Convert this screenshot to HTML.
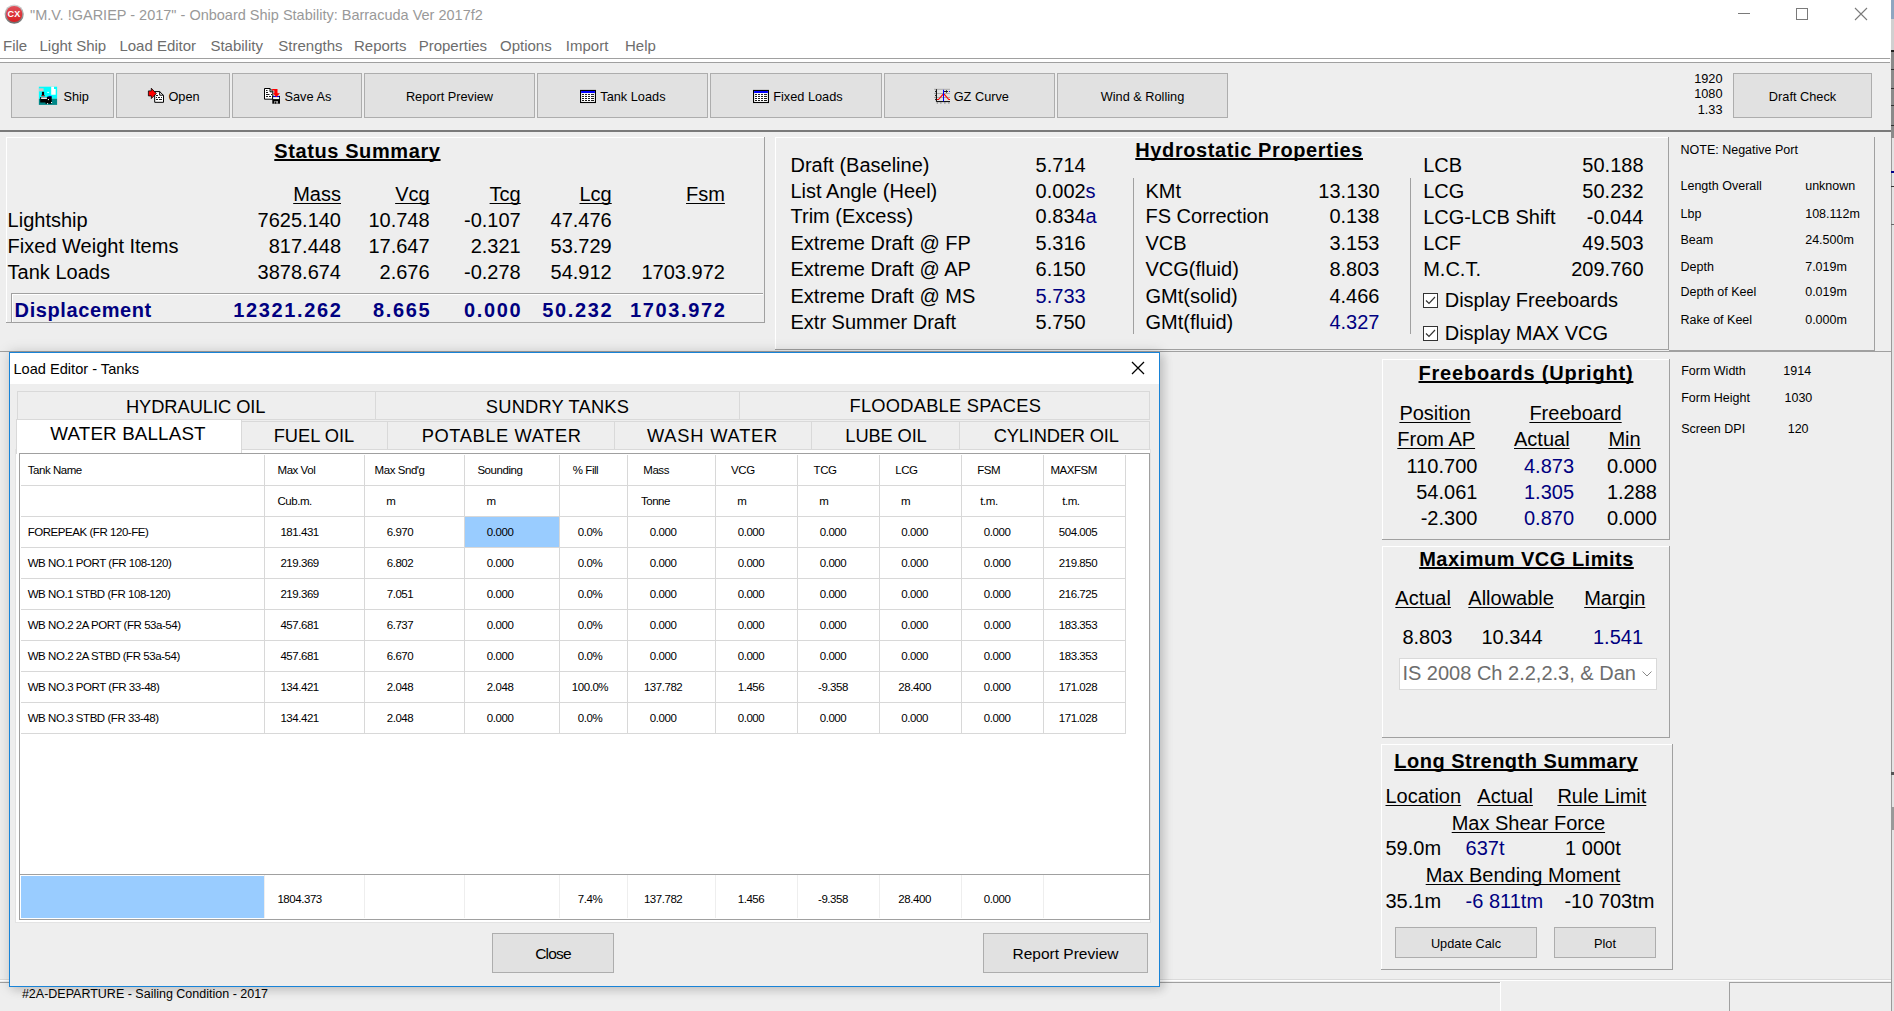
<!DOCTYPE html><html><head><meta charset="utf-8"><style>
html,body{margin:0;padding:0;width:1894px;height:1011px;overflow:hidden;background:#eeeeee;font-family:'Liberation Sans',sans-serif;color:#000}
body div,body span,body svg{position:absolute}
body span{white-space:nowrap;line-height:1;text-decoration-skip-ink:none;text-decoration-thickness:1px;text-underline-offset:2px}
</style></head><body>
<div style="left:0px;top:0px;width:1891px;height:58px;background:#fff"></div>
<div style="left:0px;top:58px;width:1890px;height:1px;background:#a0a0a0"></div>
<div style="left:0px;top:59px;width:1890px;height:3px;background:#fff"></div>
<div style="left:0px;top:62px;width:1890px;height:1px;background:#a0a0a0"></div>
<div style="left:1891px;top:0px;width:3px;height:1011px;background:#e4e4e4"></div>
<div style="left:1891px;top:138px;width:1px;height:873px;background:#9a9a9a"></div>
<div style="left:1891px;top:0px;width:3px;height:19px;background:#8ea6c0"></div>
<div style="left:1891px;top:19px;width:3px;height:32px;background:#d0d0d0"></div>
<div style="left:1891px;top:50px;width:3px;height:2px;background:#222"></div>
<div style="left:1891px;top:52px;width:3px;height:86px;background:#8a8a8a"></div>
<div style="left:1891px;top:69px;width:3px;height:1px;background:#333"></div>
<div style="left:1891px;top:88px;width:3px;height:1px;background:#333"></div>
<div style="left:1891px;top:105px;width:3px;height:1px;background:#333"></div>
<div style="left:1891px;top:125px;width:3px;height:1px;background:#333"></div>
<div style="left:1891px;top:171px;width:3px;height:2px;background:#00008b"></div>
<div style="left:1891px;top:186px;width:3px;height:1px;background:#333"></div>
<div style="left:1891px;top:224px;width:3px;height:1px;background:#666"></div>
<div style="left:1891px;top:772px;width:3px;height:3px;background:#555"></div>
<div style="left:1891px;top:807px;width:3px;height:23px;background:#999"></div>
<svg style="left:2px;top:2px" width="26" height="26" viewBox="0 0 26 26"><defs><linearGradient id="rg" x1="0" y1="0" x2="0" y2="1"><stop offset="0" stop-color="#d8d8d8"/><stop offset="1" stop-color="#6a6a6a"/></linearGradient><linearGradient id="rr" x1="0" y1="0" x2="0" y2="1"><stop offset="0" stop-color="#e0505a"/><stop offset="1" stop-color="#d81e22"/></linearGradient></defs><circle cx="12.2" cy="12.1" r="9.6" fill="url(#rg)"/><circle cx="12.2" cy="12" r="8.1" fill="url(#rr)"/></svg>
<span style="top:10.00px;font-size:9px;font-weight:bold;color:#fff;letter-spacing:0.3px;left:14px;transform:translateX(-50%);">CX</span>
<span style="top:8.00px;font-size:14.5px;color:#999;left:30px;">"M.V. !GARIEP - 2017" - Onboard Ship Stability: Barracuda Ver 2017f2</span>
<div style="left:1738px;top:13px;width:12px;height:1px;background:#7a7a7a"></div>
<div style="left:1796px;top:8px;width:12px;height:12px;border:1px solid #7a7a7a;box-sizing:border-box"></div>
<svg style="position:absolute;left:1854px;top:7px" width="14" height="14"><path d="M1 1L13 13M13 1L1 13" stroke="#7a7a7a" stroke-width="1.1"/></svg>
<span style="top:38.00px;font-size:15px;color:#6d6d6d;left:3px;">File</span>
<span style="top:38.00px;font-size:15px;color:#6d6d6d;left:39.5px;">Light Ship</span>
<span style="top:38.00px;font-size:15px;color:#6d6d6d;left:119.4px;">Load Editor</span>
<span style="top:38.00px;font-size:15px;color:#6d6d6d;left:210.4px;">Stability</span>
<span style="top:38.00px;font-size:15px;color:#6d6d6d;left:278.3px;">Strengths</span>
<span style="top:38.00px;font-size:15px;color:#6d6d6d;left:354px;">Reports</span>
<span style="top:38.00px;font-size:15px;color:#6d6d6d;left:418.7px;">Properties</span>
<span style="top:38.00px;font-size:15px;color:#6d6d6d;left:500px;">Options</span>
<span style="top:38.00px;font-size:15px;color:#6d6d6d;left:565.8px;">Import</span>
<span style="top:38.00px;font-size:15px;color:#6d6d6d;left:625px;">Help</span>
<div style="left:0px;top:63px;width:1891px;height:67px;background:#eeeeee"></div>
<div style="left:0px;top:130px;width:1891px;height:2px;background:#7a7a7a"></div>
<div style="left:11px;top:73px;width:103px;height:45px;background:#e1e1e1;border:1px solid #adadad;box-sizing:border-box"></div>
<div style="left:116px;top:73px;width:114px;height:45px;background:#e1e1e1;border:1px solid #adadad;box-sizing:border-box"></div>
<div style="left:232px;top:73px;width:130px;height:45px;background:#e1e1e1;border:1px solid #adadad;box-sizing:border-box"></div>
<div style="left:364px;top:73px;width:171px;height:45px;background:#e1e1e1;border:1px solid #adadad;box-sizing:border-box"></div>
<div style="left:537px;top:73px;width:171px;height:45px;background:#e1e1e1;border:1px solid #adadad;box-sizing:border-box"></div>
<div style="left:710px;top:73px;width:172px;height:45px;background:#e1e1e1;border:1px solid #adadad;box-sizing:border-box"></div>
<div style="left:884px;top:73px;width:171px;height:45px;background:#e1e1e1;border:1px solid #adadad;box-sizing:border-box"></div>
<div style="left:1057px;top:73px;width:171px;height:45px;background:#e1e1e1;border:1px solid #adadad;box-sizing:border-box"></div>
<span style="top:91.00px;font-size:12.75px;left:63.4px;">Ship</span>
<span style="top:91.00px;font-size:12.75px;left:168.4px;">Open</span>
<span style="top:91.00px;font-size:12.75px;left:284.5px;">Save As</span>
<span style="top:91.00px;font-size:12.75px;left:449.5px;transform:translateX(-50%);">Report Preview</span>
<span style="top:91.00px;font-size:12.75px;left:600.3px;">Tank Loads</span>
<span style="top:91.00px;font-size:12.75px;left:773.2px;">Fixed Loads</span>
<span style="top:91.00px;font-size:12.75px;left:953.7px;">GZ Curve</span>
<span style="top:91.00px;font-size:12.75px;left:1142.5px;transform:translateX(-50%);">Wind &amp; Rolling</span>
<div style="left:1733px;top:73px;width:139px;height:45px;background:#e1e1e1;border:1px solid #adadad;box-sizing:border-box"></div>
<span style="top:91.00px;font-size:12.75px;left:1802.5px;transform:translateX(-50%);">Draft Check</span>
<span style="top:73.00px;font-size:12.75px;right:171.50px;">1920</span>
<span style="top:88.00px;font-size:12.75px;right:171.50px;">1080</span>
<span style="top:104.00px;font-size:12.75px;right:171.50px;">1.33</span>
<svg style="left:36px;top:84px" width="24" height="24" viewBox="0 0 24 24"><rect x="2.85" y="2.7" width="18.25" height="12" fill="#0ff"/><rect x="2.85" y="14.7" width="18.25" height="6.2" fill="#088"/><rect x="3.1" y="4.3" width="4.5" height="3.1" fill="#d4c4c4"/><path d="M15.2 2.7H18V5H19.7V10.7H15.2Z" fill="#fff"/><rect x="11.2" y="7.9" width="1.9" height="0.9" fill="#fff"/><rect x="5.9" y="7.8" width="2.2" height="3.4" fill="#000"/><rect x="5.3" y="11.2" width="3.5" height="1.1" fill="#a00"/><path d="M4.2 13.1H11.4V12.4H15.7V19.7H9.5V18.5H4.2Z" fill="#000"/><rect x="5.1" y="13.3" width="5.8" height="1.7" fill="#e8e8e8"/><rect x="12.8" y="11.9" width="2.6" height="1.2" fill="#00a"/><rect x="11.9" y="15" width="1.1" height="1.1" fill="#fff"/><rect x="15" y="18" width="1.1" height="1.1" fill="#fff"/><rect x="11" y="19.2" width="1.1" height="1" fill="#fff"/></svg>
<svg style="left:144px;top:84px" width="24" height="24" viewBox="0 0 24 24"><path d="M10.7 7.6H15.7L19.5 11.4V18.3H10.7Z" fill="#fff" stroke="#000" stroke-width="1"/><path d="M15.7 7.6V11.2H19.5" fill="none" stroke="#000" stroke-width="1"/><path d="M12 11.5h2M12 13.5h1M14 13.5h2M17 13.5h1M12 15.5h2M15 15.5h3" stroke="#000" stroke-width="0.9"/><path d="M4.4 6.9H7.3V4.2L12.3 9.5L7.3 14.6V11.9H4.4Z" fill="#f00" stroke="#000" stroke-width="0.8"/></svg>
<svg style="left:260px;top:84px" width="24" height="24" viewBox="0 0 24 24"><path d="M4.5 4.5H10L12.8 7.3V15.2H4.5Z" fill="#fff" stroke="#000" stroke-width="1"/><path d="M10 4.5V7.8H12.8" fill="none" stroke="#000" stroke-width="1"/><path d="M6 6.5h1.5M6 8.5h2M6 10.5h3.5M11 10.5h1M6 12.5h2M9 12.5h2" stroke="#000" stroke-width="0.9"/><rect x="12.3" y="11.9" width="7.7" height="7.8" fill="#000"/><rect x="13.1" y="12.1" width="6.1" height="1" fill="#00f"/><rect x="13.1" y="13.1" width="6.1" height="2" fill="#fff"/><rect x="14.2" y="17" width="3.8" height="2.7" fill="#999"/><rect x="15.1" y="17.6" width="1" height="2.1" fill="#000"/><path d="M12.1 4.9H17.5V9.2H19.9L16.4 12.9L12.9 9.2H14.3V6.6H12.1Z" fill="#f00"/></svg>
<svg style="left:576px;top:84px" width="24" height="24" viewBox="0 0 24 24"><rect x="4.55" y="6.45" width="14.9" height="12.05" fill="#fff" stroke="#000" stroke-width="1.1"/><rect x="5.1" y="7" width="13.8" height="2" fill="#00f"/><path d="M6 10.45h2M9 10.45h2M12 10.45h2M15 10.45h3M6 12.47h2M9 12.47h2M12 12.47h2M15 12.47h3M6 14.5h2M9 14.5h2M12 14.5h2M15 14.5h3M6 16.5h2M9 16.5h2M12 16.5h2M15 16.5h3" stroke="#000" stroke-width="0.9"/></svg>
<svg style="left:749px;top:84px" width="24" height="24" viewBox="0 0 24 24"><rect x="4.55" y="6.45" width="14.9" height="12.05" fill="#fff" stroke="#000" stroke-width="1.1"/><rect x="5.1" y="7" width="13.8" height="2" fill="#00f"/><path d="M6 10.45h2M9 10.45h2M12 10.45h2M15 10.45h3M6 12.47h2M9 12.47h2M12 12.47h2M15 12.47h3M6 14.5h2M9 14.5h2M12 14.5h2M15 14.5h3M6 16.5h2M9 16.5h2M12 16.5h2M15 16.5h3" stroke="#000" stroke-width="0.9"/></svg>
<svg style="left:930px;top:84px" width="24" height="24" viewBox="0 0 24 24"><path d="M4 5.3H20M4 9.5H20M4 13.5H20" stroke="#888" stroke-width="0.6"/><path d="M6.4 5.2V17.6H20" fill="none" stroke="#000" stroke-width="1"/><path d="M5 7.5h1M5 11.5h1M5 15.5h1M6.8 19h0.8M10.5 19h0.8M14.5 19h0.8M18.5 19h0.8" stroke="#000" stroke-width="0.8"/><path d="M7 15.5H8.5L13 10.3H14.3L18.8 15.5H20" fill="none" stroke="#f00" stroke-width="1.1"/><path d="M13.5 5.8V17.3" stroke="#00f" stroke-width="1"/><path d="M14 7.5H17.5M16.3 6.3L17.5 7.5L16.3 8.7" fill="none" stroke="#000" stroke-width="0.9"/><circle cx="19.5" cy="7.5" r="0.6" fill="#00f"/></svg>
<div style="left:0px;top:132px;width:1891px;height:850px;background:#eeeeee"></div>
<div style="left:0px;top:351px;width:1891px;height:1px;background:#a0a0a0"></div>
<div style="left:6px;top:137px;width:758px;height:1px;background:#fff"></div>
<div style="left:6px;top:137px;width:1px;height:185px;background:#fff"></div>
<div style="left:6px;top:322px;width:759px;height:1px;background:#a0a0a0"></div>
<div style="left:764px;top:137px;width:1px;height:186px;background:#a0a0a0"></div>
<span style="top:141.00px;font-size:20px;font-weight:bold;letter-spacing:0.6px;text-decoration-line:underline;text-decoration-thickness:2px;text-underline-offset:1px;left:274.3px;">Status Summary</span>
<span style="top:184.00px;font-size:20px;text-decoration-line:underline;right:1553.00px;">Mass</span>
<span style="top:184.00px;font-size:20px;text-decoration-line:underline;right:1464.40px;">Vcg</span>
<span style="top:184.00px;font-size:20px;text-decoration-line:underline;right:1373.30px;">Tcg</span>
<span style="top:184.00px;font-size:20px;text-decoration-line:underline;right:1282.30px;">Lcg</span>
<span style="top:184.00px;font-size:20px;text-decoration-line:underline;right:1169.10px;">Fsm</span>
<span style="top:210.00px;font-size:20px;left:7.6px;">Lightship</span>
<span style="top:210.00px;font-size:20px;right:1553.00px;">7625.140</span>
<span style="top:210.00px;font-size:20px;right:1464.40px;">10.748</span>
<span style="top:210.00px;font-size:20px;right:1373.30px;">-0.107</span>
<span style="top:210.00px;font-size:20px;right:1282.30px;">47.476</span>
<span style="top:236.00px;font-size:20px;left:7.6px;">Fixed Weight Items</span>
<span style="top:236.00px;font-size:20px;right:1553.00px;">817.448</span>
<span style="top:236.00px;font-size:20px;right:1464.40px;">17.647</span>
<span style="top:236.00px;font-size:20px;right:1373.30px;">2.321</span>
<span style="top:236.00px;font-size:20px;right:1282.30px;">53.729</span>
<span style="top:262.00px;font-size:20px;left:7.6px;">Tank Loads</span>
<span style="top:262.00px;font-size:20px;right:1553.00px;">3878.674</span>
<span style="top:262.00px;font-size:20px;right:1464.40px;">2.676</span>
<span style="top:262.00px;font-size:20px;right:1373.30px;">-0.278</span>
<span style="top:262.00px;font-size:20px;right:1282.30px;">54.912</span>
<span style="top:262.00px;font-size:20px;right:1169.10px;">1703.972</span>
<div style="left:11px;top:293px;width:752px;height:1px;background:#a0a0a0"></div>
<div style="left:11px;top:293px;width:1px;height:29px;background:#a0a0a0"></div>
<div style="left:12px;top:294px;width:751px;height:1px;background:#fff"></div>
<div style="left:12px;top:294px;width:1px;height:28px;background:#fff"></div>
<span style="top:300.00px;font-size:20px;font-weight:bold;color:#000080;letter-spacing:0.6px;left:14.6px;">Displacement</span>
<span style="top:300.00px;font-size:20px;font-weight:bold;color:#000080;letter-spacing:1.65px;right:1551.35px;">12321.262</span>
<span style="top:300.00px;font-size:20px;font-weight:bold;color:#000080;letter-spacing:1.65px;right:1462.75px;">8.665</span>
<span style="top:300.00px;font-size:20px;font-weight:bold;color:#000080;letter-spacing:1.65px;right:1371.65px;">0.000</span>
<span style="top:300.00px;font-size:20px;font-weight:bold;color:#000080;letter-spacing:1.65px;right:1280.65px;">50.232</span>
<span style="top:300.00px;font-size:20px;font-weight:bold;color:#000080;letter-spacing:1.65px;right:1167.45px;">1703.972</span>
<div style="left:775px;top:137px;width:893px;height:1px;background:#fff"></div>
<div style="left:775px;top:137px;width:1px;height:212px;background:#fff"></div>
<div style="left:775px;top:349px;width:894px;height:1px;background:#a0a0a0"></div>
<div style="left:1668px;top:137px;width:1px;height:213px;background:#a0a0a0"></div>
<span style="top:140.00px;font-size:20px;font-weight:bold;letter-spacing:0.6px;text-decoration-line:underline;text-decoration-thickness:2px;text-underline-offset:1px;left:1135.3px;">Hydrostatic Properties</span>
<span style="top:155.00px;font-size:20px;left:790.5px;">Draft (Baseline)</span>
<span style="top:155.00px;font-size:20px;left:1035.6px;">5.714</span>
<span style="top:181.00px;font-size:20px;left:790.5px;">List Angle (Heel)</span>
<span style="top:181.00px;font-size:20px;left:1035.6px;">0.002</span>
<span style="top:181.00px;font-size:20px;color:#000080;left:1085.6px;">s</span>
<span style="top:206.00px;font-size:20px;left:790.5px;">Trim (Excess)</span>
<span style="top:206.00px;font-size:20px;left:1035.6px;">0.834</span>
<span style="top:206.00px;font-size:20px;color:#000080;left:1085.6px;">a</span>
<span style="top:233.00px;font-size:20px;left:790.5px;">Extreme Draft @ FP</span>
<span style="top:233.00px;font-size:20px;left:1035.6px;">5.316</span>
<span style="top:259.00px;font-size:20px;left:790.5px;">Extreme Draft @ AP</span>
<span style="top:259.00px;font-size:20px;left:1035.6px;">6.150</span>
<span style="top:286.00px;font-size:20px;left:790.5px;">Extreme Draft @ MS</span>
<span style="top:286.00px;font-size:20px;color:#000080;left:1035.6px;">5.733</span>
<span style="top:312.00px;font-size:20px;left:790.5px;">Extr Summer Draft</span>
<span style="top:312.00px;font-size:20px;left:1035.6px;">5.750</span>
<div style="left:1133px;top:178px;width:1px;height:156px;background:#a0a0a0"></div>
<span style="top:181.00px;font-size:20px;left:1145.5px;">KMt</span>
<span style="top:181.00px;font-size:20px;right:514.50px;">13.130</span>
<span style="top:206.00px;font-size:20px;left:1145.5px;">FS Correction</span>
<span style="top:206.00px;font-size:20px;right:514.50px;">0.138</span>
<span style="top:233.00px;font-size:20px;left:1145.5px;">VCB</span>
<span style="top:233.00px;font-size:20px;right:514.50px;">3.153</span>
<span style="top:259.00px;font-size:20px;left:1145.5px;">VCG(fluid)</span>
<span style="top:259.00px;font-size:20px;right:514.50px;">8.803</span>
<span style="top:286.00px;font-size:20px;left:1145.5px;">GMt(solid)</span>
<span style="top:286.00px;font-size:20px;right:514.50px;">4.466</span>
<span style="top:312.00px;font-size:20px;left:1145.5px;">GMt(fluid)</span>
<span style="top:312.00px;font-size:20px;color:#000080;right:514.50px;">4.327</span>
<div style="left:1410px;top:178px;width:1px;height:156px;background:#a0a0a0"></div>
<span style="top:155.00px;font-size:20px;left:1423.2px;">LCB</span>
<span style="top:155.00px;font-size:20px;right:250.50px;">50.188</span>
<span style="top:181.00px;font-size:20px;left:1423.2px;">LCG</span>
<span style="top:181.00px;font-size:20px;right:250.50px;">50.232</span>
<span style="top:207.00px;font-size:20px;left:1423.2px;">LCG-LCB Shift</span>
<span style="top:207.00px;font-size:20px;right:250.50px;">-0.044</span>
<span style="top:233.00px;font-size:20px;left:1423.2px;">LCF</span>
<span style="top:233.00px;font-size:20px;right:250.50px;">49.503</span>
<span style="top:259.00px;font-size:20px;left:1423.2px;">M.C.T.</span>
<span style="top:259.00px;font-size:20px;right:250.50px;">209.760</span>
<svg style="position:absolute;left:1423px;top:293px" width="15" height="15"><rect x="0.5" y="0.5" width="14" height="14" fill="#fff" stroke="#333"/><path d="M3 7.5l3 3 6-6.5" stroke="#333" fill="none" stroke-width="1.2"/></svg>
<span style="top:290.00px;font-size:20px;left:1444.7px;">Display Freeboards</span>
<svg style="position:absolute;left:1423px;top:325.5px" width="15" height="15"><rect x="0.5" y="0.5" width="14" height="14" fill="#fff" stroke="#333"/><path d="M3 7.5l3 3 6-6.5" stroke="#333" fill="none" stroke-width="1.2"/></svg>
<span style="top:323.00px;font-size:20px;left:1444.7px;">Display MAX VCG</span>
<div style="left:1874px;top:137px;width:1px;height:214px;background:#a0a0a0"></div>
<div style="left:1669px;top:350px;width:206px;height:1px;background:#a0a0a0"></div>
<span style="top:144.00px;font-size:12.5px;left:1680.5px;">NOTE: Negative Port</span>
<span style="top:180.00px;font-size:12.5px;left:1680.5px;">Length Overall</span>
<span style="top:180.00px;font-size:12.5px;left:1805.2px;">unknown</span>
<span style="top:208.00px;font-size:12.5px;left:1680.5px;">Lbp</span>
<span style="top:208.00px;font-size:12.5px;left:1805.2px;">108.112m</span>
<span style="top:234.00px;font-size:12.5px;left:1680.5px;">Beam</span>
<span style="top:234.00px;font-size:12.5px;left:1805.2px;">24.500m</span>
<span style="top:261.00px;font-size:12.5px;left:1680.5px;">Depth</span>
<span style="top:261.00px;font-size:12.5px;left:1805.2px;">7.019m</span>
<span style="top:286.00px;font-size:12.5px;left:1680.5px;">Depth of Keel</span>
<span style="top:286.00px;font-size:12.5px;left:1805.2px;">0.019m</span>
<span style="top:314.00px;font-size:12.5px;left:1680.5px;">Rake of Keel</span>
<span style="top:314.00px;font-size:12.5px;left:1805.2px;">0.000m</span>
<div style="left:1382px;top:359px;width:287px;height:1px;background:#fff"></div>
<div style="left:1382px;top:359px;width:1px;height:180px;background:#fff"></div>
<div style="left:1382px;top:539px;width:288px;height:1px;background:#a0a0a0"></div>
<div style="left:1669px;top:359px;width:1px;height:181px;background:#a0a0a0"></div>
<span style="top:363.00px;font-size:20px;font-weight:bold;letter-spacing:0.8px;text-decoration-line:underline;text-decoration-thickness:2px;text-underline-offset:1px;left:1418.5px;">Freeboards (Upright)</span>
<span style="top:403.00px;font-size:20px;text-decoration-line:underline;left:1399.4px;">Position</span>
<span style="top:403.00px;font-size:20px;text-decoration-line:underline;left:1529.4px;">Freeboard</span>
<span style="top:429.00px;font-size:20px;text-decoration-line:underline;left:1397.3px;">From AP</span>
<span style="top:429.00px;font-size:20px;text-decoration-line:underline;left:1514px;">Actual</span>
<span style="top:429.00px;font-size:20px;text-decoration-line:underline;left:1608.4px;">Min</span>
<span style="top:456.00px;font-size:20px;right:416.60px;">110.700</span>
<span style="top:456.00px;font-size:20px;color:#000080;left:1549px;transform:translateX(-50%);">4.873</span>
<span style="top:456.00px;font-size:20px;right:237.00px;">0.000</span>
<span style="top:482.00px;font-size:20px;right:416.60px;">54.061</span>
<span style="top:482.00px;font-size:20px;color:#000080;left:1549px;transform:translateX(-50%);">1.305</span>
<span style="top:482.00px;font-size:20px;right:237.00px;">1.288</span>
<span style="top:508.00px;font-size:20px;right:416.60px;">-2.300</span>
<span style="top:508.00px;font-size:20px;color:#000080;left:1549px;transform:translateX(-50%);">0.870</span>
<span style="top:508.00px;font-size:20px;right:237.00px;">0.000</span>
<div style="left:1382px;top:546px;width:287px;height:1px;background:#fff"></div>
<div style="left:1382px;top:546px;width:1px;height:191px;background:#fff"></div>
<div style="left:1382px;top:737px;width:288px;height:1px;background:#a0a0a0"></div>
<div style="left:1669px;top:546px;width:1px;height:192px;background:#a0a0a0"></div>
<span style="top:549.00px;font-size:20px;font-weight:bold;letter-spacing:0.5px;text-decoration-line:underline;text-decoration-thickness:2px;text-underline-offset:1px;left:1419.2px;">Maximum VCG Limits</span>
<span style="top:588.00px;font-size:20px;text-decoration-line:underline;left:1395.3px;">Actual</span>
<span style="top:588.00px;font-size:20px;text-decoration-line:underline;left:1468.3px;">Allowable</span>
<span style="top:588.00px;font-size:20px;text-decoration-line:underline;left:1584.2px;">Margin</span>
<span style="top:627.00px;font-size:20px;left:1402.4px;">8.803</span>
<span style="top:627.00px;font-size:20px;left:1481.4px;">10.344</span>
<span style="top:627.00px;font-size:20px;color:#000080;left:1593px;">1.541</span>
<div style="left:1399px;top:658px;width:258px;height:32px;background:#fff;border:1px solid #d9d9d9;box-sizing:border-box"></div>
<span style="top:663.00px;font-size:20px;color:#6d6d6d;left:1402.4px;">IS 2008 Ch 2.2,2.3, &amp; Dan</span>
<svg style="position:absolute;left:1642px;top:671px" width="10" height="6"><path d="M0.5 0.5l4.5 4.5 4.5-4.5" stroke="#888" fill="none"/></svg>
<div style="left:1381px;top:744px;width:291px;height:1px;background:#fff"></div>
<div style="left:1381px;top:744px;width:1px;height:225px;background:#fff"></div>
<div style="left:1381px;top:969px;width:292px;height:1px;background:#a0a0a0"></div>
<div style="left:1672px;top:744px;width:1px;height:226px;background:#a0a0a0"></div>
<span style="top:751.00px;font-size:20px;font-weight:bold;letter-spacing:0.5px;text-decoration-line:underline;text-decoration-thickness:2px;text-underline-offset:1px;left:1394.3px;">Long Strength Summary</span>
<span style="top:786.00px;font-size:20px;text-decoration-line:underline;left:1385.5px;">Location</span>
<span style="top:786.00px;font-size:20px;text-decoration-line:underline;left:1477.3px;">Actual</span>
<span style="top:786.00px;font-size:20px;text-decoration-line:underline;left:1557.4px;">Rule Limit</span>
<span style="top:813.00px;font-size:20px;text-decoration-line:underline;left:1451.7px;">Max Shear Force</span>
<span style="top:838.00px;font-size:20px;left:1385.5px;">59.0m</span>
<span style="top:838.00px;font-size:20px;color:#000080;left:1465.6px;">637t</span>
<span style="top:838.00px;font-size:20px;left:1565.1px;">1 000t</span>
<span style="top:865.00px;font-size:20px;text-decoration-line:underline;left:1425.7px;">Max Bending Moment</span>
<span style="top:891.00px;font-size:20px;left:1385.5px;">35.1m</span>
<span style="top:891.00px;font-size:20px;color:#000080;left:1465.6px;">-6 811tm</span>
<span style="top:891.00px;font-size:20px;left:1564.4px;">-10 703tm</span>
<div style="left:1395px;top:927px;width:142px;height:31px;background:#e1e1e1;border:1px solid #adadad;box-sizing:border-box"></div>
<span style="top:938.00px;font-size:12.75px;left:1466.0px;transform:translateX(-50%);">Update Calc</span>
<div style="left:1554px;top:927px;width:102px;height:31px;background:#e1e1e1;border:1px solid #adadad;box-sizing:border-box"></div>
<span style="top:938.00px;font-size:12.75px;left:1605.0px;transform:translateX(-50%);">Plot</span>
<span style="top:365.00px;font-size:12.5px;left:1681.2px;">Form Width</span>
<span style="top:365.00px;font-size:12.5px;left:1783.3px;">1914</span>
<span style="top:392.00px;font-size:12.5px;left:1681.2px;">Form Height</span>
<span style="top:392.00px;font-size:12.5px;left:1784.5px;">1030</span>
<span style="top:423.00px;font-size:12.5px;left:1681.2px;">Screen DPI</span>
<span style="top:423.00px;font-size:12.5px;left:1787.7px;">120</span>
<div style="left:0px;top:979px;width:1891px;height:1px;background:#dadada"></div>
<div style="left:0px;top:980px;width:1891px;height:1px;background:#fff"></div>
<div style="left:0px;top:982px;width:1500px;height:1px;background:#a0a0a0"></div>
<div style="left:1500px;top:982px;width:1px;height:29px;background:#fff"></div>
<div style="left:1729px;top:982px;width:162px;height:1px;background:#a0a0a0"></div>
<div style="left:1729px;top:982px;width:1px;height:29px;background:#a0a0a0"></div>
<div style="left:9px;top:352px;width:1151px;height:635px;box-shadow:0 0 12px 1px rgba(0,0,0,0.13),4px 3px 9px rgba(0,0,0,0.12)"></div>
<div style="left:9px;top:352px;width:1151px;height:635px;background:#eeeeee;border:1px solid #1883d7;box-sizing:border-box"></div>
<div style="left:10px;top:353px;width:1149px;height:31px;background:#fff"></div>
<span style="top:362.00px;font-size:14.6px;left:13.5px;">Load Editor - Tanks</span>
<svg style="position:absolute;left:1131px;top:361px" width="14" height="14"><path d="M1 1L13 13M13 1L1 13" stroke="#000" stroke-width="1.3"/></svg>
<div style="left:17px;top:391px;width:1133px;height:29px;border:1px solid #d9d9d9;box-sizing:border-box"></div>
<div style="left:375px;top:391px;width:1px;height:29px;background:#d9d9d9"></div>
<div style="left:739px;top:391px;width:1px;height:29px;background:#d9d9d9"></div>
<span style="top:398.00px;font-size:18.3px;letter-spacing:-0.05px;left:195.7px;transform:translateX(-50%);">HYDRAULIC OIL</span>
<span style="top:398.00px;font-size:18.3px;letter-spacing:0.2px;left:557.5px;transform:translateX(-50%);">SUNDRY TANKS</span>
<span style="top:397.00px;font-size:18.3px;letter-spacing:0.25px;left:945.3px;transform:translateX(-50%);">FLOODABLE SPACES</span>
<div style="left:17px;top:421px;width:1133px;height:29px;border:1px solid #d9d9d9;border-bottom:none;box-sizing:border-box"></div>
<div style="left:387px;top:421px;width:1px;height:28px;background:#d9d9d9"></div>
<div style="left:614px;top:421px;width:1px;height:28px;background:#d9d9d9"></div>
<div style="left:811px;top:421px;width:1px;height:28px;background:#d9d9d9"></div>
<div style="left:959px;top:421px;width:1px;height:28px;background:#d9d9d9"></div>
<span style="top:427.00px;font-size:18.3px;left:314px;transform:translateX(-50%);">FUEL OIL</span>
<span style="top:427.00px;font-size:18.3px;letter-spacing:0.6px;left:501.6px;transform:translateX(-50%);">POTABLE WATER</span>
<span style="top:427.00px;font-size:18.3px;letter-spacing:0.8px;left:712.5px;transform:translateX(-50%);">WASH WATER</span>
<span style="top:427.00px;font-size:18.3px;letter-spacing:-0.13px;left:886px;transform:translateX(-50%);">LUBE OIL</span>
<span style="top:427.00px;font-size:18.3px;letter-spacing:-0.17px;left:1056.2px;transform:translateX(-50%);">CYLINDER OIL</span>
<div style="left:15px;top:449px;width:1136px;height:474px;background:#fff;border:1px solid #e3e3e3;border-top:none;box-sizing:border-box"></div>
<div style="left:241px;top:449px;width:909px;height:1px;background:#d9d9d9"></div>
<div style="left:16px;top:419px;width:226px;height:35px;background:#fff;border:1px solid #d9d9d9;border-bottom:none;box-sizing:border-box"></div>
<span style="top:425.00px;font-size:18.8px;letter-spacing:0.15px;left:128px;transform:translateX(-50%);">WATER BALLAST</span>
<div style="left:19px;top:453px;width:1131px;height:467px;background:#fff;border:1px solid #a0a0a0;box-sizing:border-box"></div>
<div style="left:264px;top:455px;width:1px;height:278px;background:#d8d8d8"></div>
<div style="left:364px;top:455px;width:1px;height:278px;background:#d8d8d8"></div>
<div style="left:464px;top:455px;width:1px;height:278px;background:#d8d8d8"></div>
<div style="left:559px;top:455px;width:1px;height:278px;background:#d8d8d8"></div>
<div style="left:627px;top:455px;width:1px;height:278px;background:#d8d8d8"></div>
<div style="left:715px;top:455px;width:1px;height:278px;background:#d8d8d8"></div>
<div style="left:797px;top:455px;width:1px;height:278px;background:#d8d8d8"></div>
<div style="left:879px;top:455px;width:1px;height:278px;background:#d8d8d8"></div>
<div style="left:961px;top:455px;width:1px;height:278px;background:#d8d8d8"></div>
<div style="left:1043px;top:455px;width:1px;height:278px;background:#d8d8d8"></div>
<div style="left:1125px;top:455px;width:1px;height:278px;background:#d8d8d8"></div>
<div style="left:21px;top:485px;width:1105px;height:1px;background:#d8d8d8"></div>
<div style="left:21px;top:516px;width:1105px;height:1px;background:#d8d8d8"></div>
<div style="left:21px;top:547px;width:1105px;height:1px;background:#d8d8d8"></div>
<div style="left:21px;top:578px;width:1105px;height:1px;background:#d8d8d8"></div>
<div style="left:21px;top:609px;width:1105px;height:1px;background:#d8d8d8"></div>
<div style="left:21px;top:640px;width:1105px;height:1px;background:#d8d8d8"></div>
<div style="left:21px;top:671px;width:1105px;height:1px;background:#d8d8d8"></div>
<div style="left:21px;top:702px;width:1105px;height:1px;background:#d8d8d8"></div>
<div style="left:21px;top:733px;width:1105px;height:1px;background:#d8d8d8"></div>
<div style="left:465px;top:517px;width:94px;height:30px;background:#99ccff"></div>
<span style="top:465.00px;font-size:11.5px;letter-spacing:-0.45px;left:27.7px;">Tank Name</span>
<span style="top:465.00px;font-size:11.5px;letter-spacing:-0.45px;left:277.5px;">Max Vol</span>
<span style="top:496.00px;font-size:11.5px;letter-spacing:-0.45px;left:277.5px;">Cub.m.</span>
<span style="top:465.00px;font-size:11.5px;letter-spacing:-0.45px;left:374.6px;">Max Snd'g</span>
<span style="top:496.00px;font-size:11.5px;letter-spacing:-0.45px;left:386.3px;">m</span>
<span style="top:465.00px;font-size:11.5px;letter-spacing:-0.45px;left:477.4px;">Sounding</span>
<span style="top:496.00px;font-size:11.5px;letter-spacing:-0.45px;left:486.4px;">m</span>
<span style="top:465.00px;font-size:11.5px;letter-spacing:-0.45px;left:572.8px;">% Fill</span>
<span style="top:465.00px;font-size:11.5px;letter-spacing:-0.45px;left:643.3px;">Mass</span>
<span style="top:496.00px;font-size:11.5px;letter-spacing:-0.45px;left:640.9px;">Tonne</span>
<span style="top:465.00px;font-size:11.5px;letter-spacing:-0.45px;left:731.1px;">VCG</span>
<span style="top:496.00px;font-size:11.5px;letter-spacing:-0.45px;left:737.3px;">m</span>
<span style="top:465.00px;font-size:11.5px;letter-spacing:-0.45px;left:813.6px;">TCG</span>
<span style="top:496.00px;font-size:11.5px;letter-spacing:-0.45px;left:819.3px;">m</span>
<span style="top:465.00px;font-size:11.5px;letter-spacing:-0.45px;left:895.3px;">LCG</span>
<span style="top:496.00px;font-size:11.5px;letter-spacing:-0.45px;left:900.9px;">m</span>
<span style="top:465.00px;font-size:11.5px;letter-spacing:-0.45px;left:977.2px;">FSM</span>
<span style="top:496.00px;font-size:11.5px;letter-spacing:-0.45px;left:980.3px;">t.m.</span>
<span style="top:465.00px;font-size:11.5px;letter-spacing:-0.45px;left:1050.4px;">MAXFSM</span>
<span style="top:496.00px;font-size:11.5px;letter-spacing:-0.45px;left:1062.2px;">t.m.</span>
<span style="top:527.00px;font-size:11.5px;letter-spacing:-0.45px;left:27.7px;">FOREPEAK (FR 120-FE)</span>
<span style="top:527.00px;font-size:11.5px;letter-spacing:-0.45px;left:299.6px;transform:translateX(-50%);">181.431</span>
<span style="top:527.00px;font-size:11.5px;letter-spacing:-0.45px;left:400px;transform:translateX(-50%);">6.970</span>
<span style="top:527.00px;font-size:11.5px;letter-spacing:-0.45px;left:500.1px;transform:translateX(-50%);">0.000</span>
<span style="top:527.00px;font-size:11.5px;letter-spacing:-0.45px;left:590px;transform:translateX(-50%);">0.0%</span>
<span style="top:527.00px;font-size:11.5px;letter-spacing:-0.45px;left:663.1px;transform:translateX(-50%);">0.000</span>
<span style="top:527.00px;font-size:11.5px;letter-spacing:-0.45px;left:751px;transform:translateX(-50%);">0.000</span>
<span style="top:527.00px;font-size:11.5px;letter-spacing:-0.45px;left:833px;transform:translateX(-50%);">0.000</span>
<span style="top:527.00px;font-size:11.5px;letter-spacing:-0.45px;left:914.6px;transform:translateX(-50%);">0.000</span>
<span style="top:527.00px;font-size:11.5px;letter-spacing:-0.45px;left:997.1px;transform:translateX(-50%);">0.000</span>
<span style="top:527.00px;font-size:11.5px;letter-spacing:-0.45px;left:1078px;transform:translateX(-50%);">504.005</span>
<span style="top:558.00px;font-size:11.5px;letter-spacing:-0.45px;left:27.7px;">WB NO.1 PORT (FR 108-120)</span>
<span style="top:558.00px;font-size:11.5px;letter-spacing:-0.45px;left:299.6px;transform:translateX(-50%);">219.369</span>
<span style="top:558.00px;font-size:11.5px;letter-spacing:-0.45px;left:400px;transform:translateX(-50%);">6.802</span>
<span style="top:558.00px;font-size:11.5px;letter-spacing:-0.45px;left:500.1px;transform:translateX(-50%);">0.000</span>
<span style="top:558.00px;font-size:11.5px;letter-spacing:-0.45px;left:590px;transform:translateX(-50%);">0.0%</span>
<span style="top:558.00px;font-size:11.5px;letter-spacing:-0.45px;left:663.1px;transform:translateX(-50%);">0.000</span>
<span style="top:558.00px;font-size:11.5px;letter-spacing:-0.45px;left:751px;transform:translateX(-50%);">0.000</span>
<span style="top:558.00px;font-size:11.5px;letter-spacing:-0.45px;left:833px;transform:translateX(-50%);">0.000</span>
<span style="top:558.00px;font-size:11.5px;letter-spacing:-0.45px;left:914.6px;transform:translateX(-50%);">0.000</span>
<span style="top:558.00px;font-size:11.5px;letter-spacing:-0.45px;left:997.1px;transform:translateX(-50%);">0.000</span>
<span style="top:558.00px;font-size:11.5px;letter-spacing:-0.45px;left:1078px;transform:translateX(-50%);">219.850</span>
<span style="top:589.00px;font-size:11.5px;letter-spacing:-0.45px;left:27.7px;">WB NO.1 STBD (FR 108-120)</span>
<span style="top:589.00px;font-size:11.5px;letter-spacing:-0.45px;left:299.6px;transform:translateX(-50%);">219.369</span>
<span style="top:589.00px;font-size:11.5px;letter-spacing:-0.45px;left:400px;transform:translateX(-50%);">7.051</span>
<span style="top:589.00px;font-size:11.5px;letter-spacing:-0.45px;left:500.1px;transform:translateX(-50%);">0.000</span>
<span style="top:589.00px;font-size:11.5px;letter-spacing:-0.45px;left:590px;transform:translateX(-50%);">0.0%</span>
<span style="top:589.00px;font-size:11.5px;letter-spacing:-0.45px;left:663.1px;transform:translateX(-50%);">0.000</span>
<span style="top:589.00px;font-size:11.5px;letter-spacing:-0.45px;left:751px;transform:translateX(-50%);">0.000</span>
<span style="top:589.00px;font-size:11.5px;letter-spacing:-0.45px;left:833px;transform:translateX(-50%);">0.000</span>
<span style="top:589.00px;font-size:11.5px;letter-spacing:-0.45px;left:914.6px;transform:translateX(-50%);">0.000</span>
<span style="top:589.00px;font-size:11.5px;letter-spacing:-0.45px;left:997.1px;transform:translateX(-50%);">0.000</span>
<span style="top:589.00px;font-size:11.5px;letter-spacing:-0.45px;left:1078px;transform:translateX(-50%);">216.725</span>
<span style="top:620.00px;font-size:11.5px;letter-spacing:-0.45px;left:27.7px;">WB NO.2 2A PORT (FR 53a-54)</span>
<span style="top:620.00px;font-size:11.5px;letter-spacing:-0.45px;left:299.6px;transform:translateX(-50%);">457.681</span>
<span style="top:620.00px;font-size:11.5px;letter-spacing:-0.45px;left:400px;transform:translateX(-50%);">6.737</span>
<span style="top:620.00px;font-size:11.5px;letter-spacing:-0.45px;left:500.1px;transform:translateX(-50%);">0.000</span>
<span style="top:620.00px;font-size:11.5px;letter-spacing:-0.45px;left:590px;transform:translateX(-50%);">0.0%</span>
<span style="top:620.00px;font-size:11.5px;letter-spacing:-0.45px;left:663.1px;transform:translateX(-50%);">0.000</span>
<span style="top:620.00px;font-size:11.5px;letter-spacing:-0.45px;left:751px;transform:translateX(-50%);">0.000</span>
<span style="top:620.00px;font-size:11.5px;letter-spacing:-0.45px;left:833px;transform:translateX(-50%);">0.000</span>
<span style="top:620.00px;font-size:11.5px;letter-spacing:-0.45px;left:914.6px;transform:translateX(-50%);">0.000</span>
<span style="top:620.00px;font-size:11.5px;letter-spacing:-0.45px;left:997.1px;transform:translateX(-50%);">0.000</span>
<span style="top:620.00px;font-size:11.5px;letter-spacing:-0.45px;left:1078px;transform:translateX(-50%);">183.353</span>
<span style="top:651.00px;font-size:11.5px;letter-spacing:-0.45px;left:27.7px;">WB NO.2 2A STBD (FR 53a-54)</span>
<span style="top:651.00px;font-size:11.5px;letter-spacing:-0.45px;left:299.6px;transform:translateX(-50%);">457.681</span>
<span style="top:651.00px;font-size:11.5px;letter-spacing:-0.45px;left:400px;transform:translateX(-50%);">6.670</span>
<span style="top:651.00px;font-size:11.5px;letter-spacing:-0.45px;left:500.1px;transform:translateX(-50%);">0.000</span>
<span style="top:651.00px;font-size:11.5px;letter-spacing:-0.45px;left:590px;transform:translateX(-50%);">0.0%</span>
<span style="top:651.00px;font-size:11.5px;letter-spacing:-0.45px;left:663.1px;transform:translateX(-50%);">0.000</span>
<span style="top:651.00px;font-size:11.5px;letter-spacing:-0.45px;left:751px;transform:translateX(-50%);">0.000</span>
<span style="top:651.00px;font-size:11.5px;letter-spacing:-0.45px;left:833px;transform:translateX(-50%);">0.000</span>
<span style="top:651.00px;font-size:11.5px;letter-spacing:-0.45px;left:914.6px;transform:translateX(-50%);">0.000</span>
<span style="top:651.00px;font-size:11.5px;letter-spacing:-0.45px;left:997.1px;transform:translateX(-50%);">0.000</span>
<span style="top:651.00px;font-size:11.5px;letter-spacing:-0.45px;left:1078px;transform:translateX(-50%);">183.353</span>
<span style="top:682.00px;font-size:11.5px;letter-spacing:-0.45px;left:27.7px;">WB NO.3 PORT (FR 33-48)</span>
<span style="top:682.00px;font-size:11.5px;letter-spacing:-0.45px;left:299.6px;transform:translateX(-50%);">134.421</span>
<span style="top:682.00px;font-size:11.5px;letter-spacing:-0.45px;left:400px;transform:translateX(-50%);">2.048</span>
<span style="top:682.00px;font-size:11.5px;letter-spacing:-0.45px;left:500.1px;transform:translateX(-50%);">2.048</span>
<span style="top:682.00px;font-size:11.5px;letter-spacing:-0.45px;left:590px;transform:translateX(-50%);">100.0%</span>
<span style="top:682.00px;font-size:11.5px;letter-spacing:-0.45px;left:663.1px;transform:translateX(-50%);">137.782</span>
<span style="top:682.00px;font-size:11.5px;letter-spacing:-0.45px;left:751px;transform:translateX(-50%);">1.456</span>
<span style="top:682.00px;font-size:11.5px;letter-spacing:-0.45px;left:833px;transform:translateX(-50%);">-9.358</span>
<span style="top:682.00px;font-size:11.5px;letter-spacing:-0.45px;left:914.6px;transform:translateX(-50%);">28.400</span>
<span style="top:682.00px;font-size:11.5px;letter-spacing:-0.45px;left:997.1px;transform:translateX(-50%);">0.000</span>
<span style="top:682.00px;font-size:11.5px;letter-spacing:-0.45px;left:1078px;transform:translateX(-50%);">171.028</span>
<span style="top:713.00px;font-size:11.5px;letter-spacing:-0.45px;left:27.7px;">WB NO.3 STBD (FR 33-48)</span>
<span style="top:713.00px;font-size:11.5px;letter-spacing:-0.45px;left:299.6px;transform:translateX(-50%);">134.421</span>
<span style="top:713.00px;font-size:11.5px;letter-spacing:-0.45px;left:400px;transform:translateX(-50%);">2.048</span>
<span style="top:713.00px;font-size:11.5px;letter-spacing:-0.45px;left:500.1px;transform:translateX(-50%);">0.000</span>
<span style="top:713.00px;font-size:11.5px;letter-spacing:-0.45px;left:590px;transform:translateX(-50%);">0.0%</span>
<span style="top:713.00px;font-size:11.5px;letter-spacing:-0.45px;left:663.1px;transform:translateX(-50%);">0.000</span>
<span style="top:713.00px;font-size:11.5px;letter-spacing:-0.45px;left:751px;transform:translateX(-50%);">0.000</span>
<span style="top:713.00px;font-size:11.5px;letter-spacing:-0.45px;left:833px;transform:translateX(-50%);">0.000</span>
<span style="top:713.00px;font-size:11.5px;letter-spacing:-0.45px;left:914.6px;transform:translateX(-50%);">0.000</span>
<span style="top:713.00px;font-size:11.5px;letter-spacing:-0.45px;left:997.1px;transform:translateX(-50%);">0.000</span>
<span style="top:713.00px;font-size:11.5px;letter-spacing:-0.45px;left:1078px;transform:translateX(-50%);">171.028</span>
<div style="left:20px;top:874px;width:1129px;height:1px;background:#a0a0a0"></div>
<div style="left:264px;top:875px;width:1px;height:43px;background:#eeeeee"></div>
<div style="left:364px;top:875px;width:1px;height:43px;background:#eeeeee"></div>
<div style="left:464px;top:875px;width:1px;height:43px;background:#eeeeee"></div>
<div style="left:559px;top:875px;width:1px;height:43px;background:#eeeeee"></div>
<div style="left:627px;top:875px;width:1px;height:43px;background:#eeeeee"></div>
<div style="left:715px;top:875px;width:1px;height:43px;background:#eeeeee"></div>
<div style="left:797px;top:875px;width:1px;height:43px;background:#eeeeee"></div>
<div style="left:879px;top:875px;width:1px;height:43px;background:#eeeeee"></div>
<div style="left:961px;top:875px;width:1px;height:43px;background:#eeeeee"></div>
<div style="left:1043px;top:875px;width:1px;height:43px;background:#eeeeee"></div>
<div style="left:21px;top:876px;width:243px;height:42px;background:#99ccff"></div>
<span style="top:894.00px;font-size:11.5px;letter-spacing:-0.45px;left:299.6px;transform:translateX(-50%);">1804.373</span>
<span style="top:894.00px;font-size:11.5px;letter-spacing:-0.45px;left:590px;transform:translateX(-50%);">7.4%</span>
<span style="top:894.00px;font-size:11.5px;letter-spacing:-0.45px;left:663.1px;transform:translateX(-50%);">137.782</span>
<span style="top:894.00px;font-size:11.5px;letter-spacing:-0.45px;left:751px;transform:translateX(-50%);">1.456</span>
<span style="top:894.00px;font-size:11.5px;letter-spacing:-0.45px;left:833px;transform:translateX(-50%);">-9.358</span>
<span style="top:894.00px;font-size:11.5px;letter-spacing:-0.45px;left:914.6px;transform:translateX(-50%);">28.400</span>
<span style="top:894.00px;font-size:11.5px;letter-spacing:-0.45px;left:997.1px;transform:translateX(-50%);">0.000</span>
<div style="left:492px;top:933px;width:122px;height:40px;background:#e1e1e1;border:1px solid #adadad;box-sizing:border-box"></div>
<span style="top:946.00px;font-size:15.5px;letter-spacing:-0.8px;left:553px;transform:translateX(-50%);">Close</span>
<div style="left:983px;top:933px;width:165px;height:40px;background:#e1e1e1;border:1px solid #adadad;box-sizing:border-box"></div>
<span style="top:946.00px;font-size:15.5px;left:1065.5px;transform:translateX(-50%);">Report Preview</span>
<span style="top:988.00px;font-size:12.5px;left:21.9px;">#2A-DEPARTURE - Sailing Condition - 2017</span>
</body></html>
